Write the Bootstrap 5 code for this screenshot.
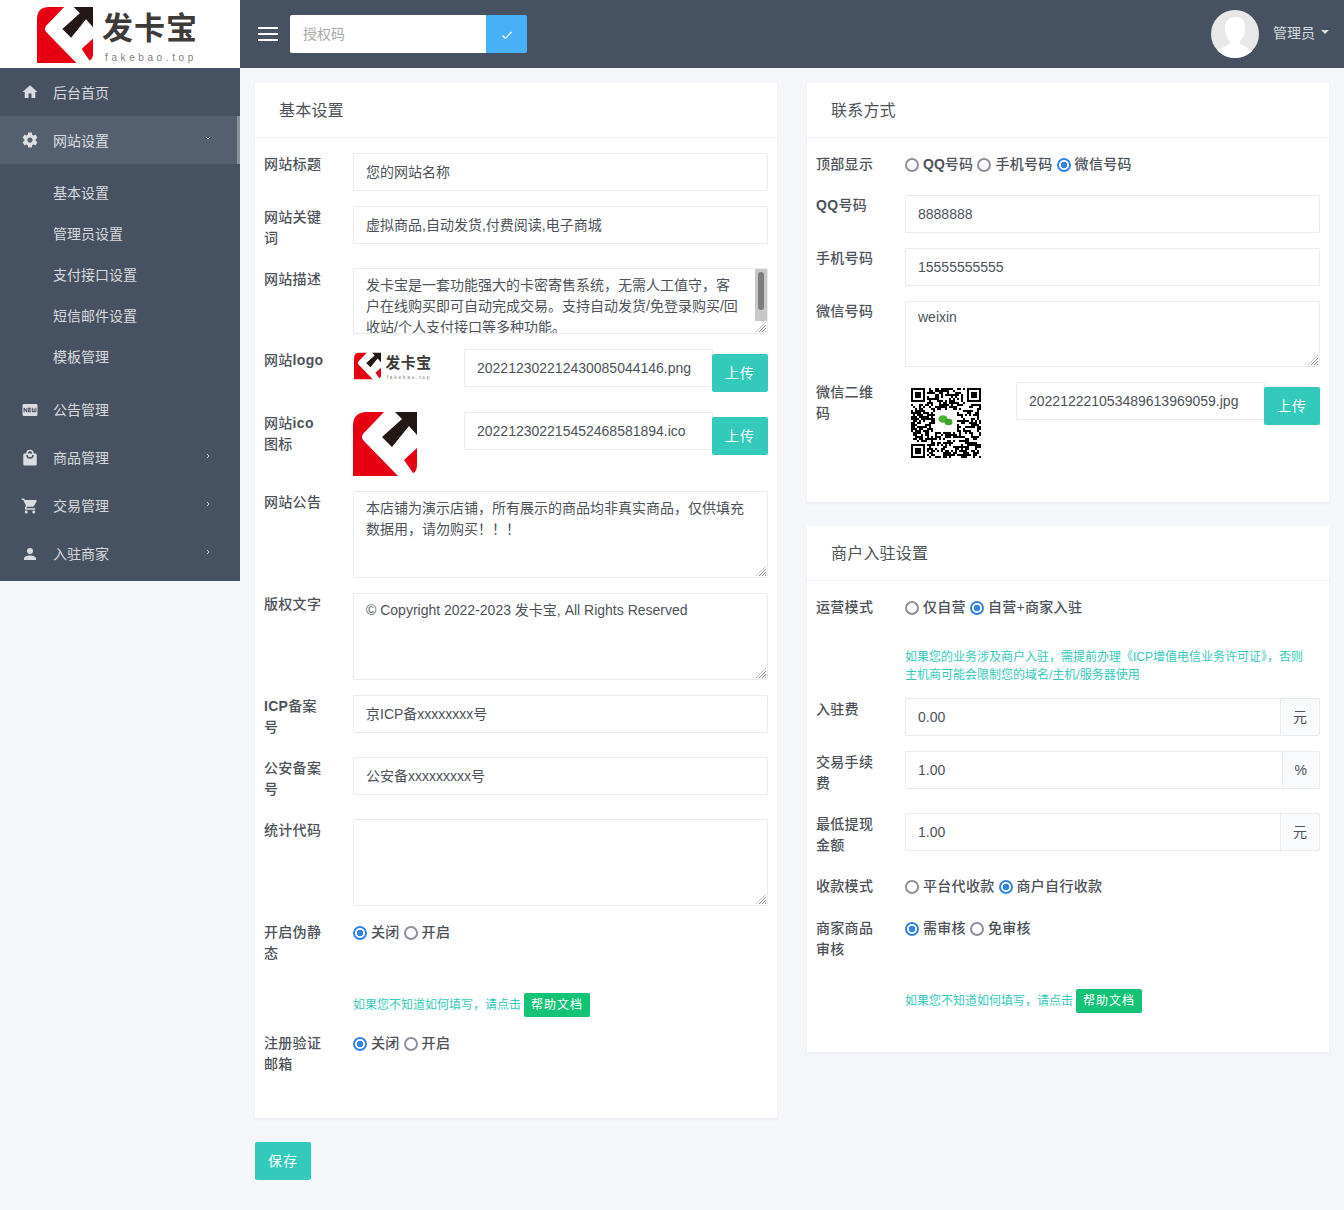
<!DOCTYPE html>
<html lang="zh-CN">
<head>
  <meta charset="UTF-8">
  <meta name="viewport" content="width=device-width, initial-scale=1">
  <title>网站设置</title>

  <link href="https://cdn.jsdelivr.net/npm/bootstrap@5.3.0/dist/css/bootstrap.min.css" rel="stylesheet">

  <style>
    body { background: #f5f6fa; color: #4d5259; font-family: "Liberation Sans", "Noto Sans CJK SC", sans-serif; font-size: 14px; line-height: 21px; }

    /* top bar */
    .top-bar { height: 68px; background: #465161; }
    .brand-box { width: 240px; height: 68px; background: #fff; padding: 2px 0 0 37px; }
    .brand-box svg { display: block; }
    .burger { width: 20px; margin: 0 12px 0 18px; }
    .burger span { display: block; height: 2px; background: #fff; margin: 4px 0; }
    .auth-box { width: 237px; }
    .auth-box .form-control { height: 38px; border: 0; padding-left: 13px; }
    .auth-box .btn { width: 41px; height: 38px; padding: 0; background: #48b0f7; border: 0; border-radius: 0 2px 2px 0; }
    .avatar-pic { width: 48px; height: 48px; display: block; }
    .admin-link { color: rgba(255,255,255,.8); margin: 0 15px 2px 14px; text-decoration: none; }
    .admin-link:hover { color: #fff; }
    .admin-link::after { margin-left: 6px; }

    /* side menu */
    .side-menu { width: 240px; height: 513px; background: #465161; flex-shrink: 0; }
    .side-link { position: relative; height: 48px; padding: 0 0 0 21px; color: rgba(255,255,255,.8); display: flex; align-items: center; }
    .side-link:hover { color: #fff; }
    .side-link svg.ico { width: 18px; height: 18px; margin-right: 14px; fill: currentColor; flex-shrink: 0; }
    .side-link .arrow { position: absolute; left: 205px; top: 19px; width: 6px; height: 6px; fill: none; stroke: rgba(255,255,255,.75); stroke-width: 1; }
    .side-link.low-text { padding-top: 2px; }
    .side-link.low-text svg.ico { margin-top: -2px; }
    .side-link.is-open { background: #545f6f; box-shadow: inset -3px 0 0 #8a929c; }
    .side-sub { padding: 9px 0 8px; }
    .side-sub a { display: block; height: 41px; line-height: 41px; padding-left: 53px; color: rgba(255,255,255,.8); text-decoration: none; }

    /* panels */
    .main-area { padding: 15px 15px 30px; }
    .main-row { --bs-gutter-x: 30px; --bs-gutter-y: 0; }
    .panel-box { border: 0; border-radius: 0; box-shadow: 0 2px 3px rgba(0,0,0,.035); margin-bottom: 24px; }
    .panel-box .card-header { height: 55px; padding: 17px 24px 0 24px; background: #fff; border-bottom: 1px solid #f1f2f3; border-radius: 0; font-size: 16px; letter-spacing: .2px; color: #4d5259; }
    .panel-box .card-body { padding: 15px 9px 24px; }
    .field-line { display: flex; margin-bottom: 15px; }
    .field-name { width: 62px; margin: 1px 27px 4px 0; flex-shrink: 0; font-weight: 500; letter-spacing: .3px; color: #4d5259; }
    .field-name.flush { margin: 0 27px 5px 0; }
    .field-val { flex: 1; min-width: 0; }

    .form-control { height: 38px; padding: 6px 12px; font-size: 14px; line-height: 21px; color: #4d5259; border: 1px solid #ebebeb; border-radius: 2px; }
    .form-control::placeholder { color: #aaa; }
    .form-control.cjk-val { padding: 5px 12px 7px; }
    textarea.form-control { display: block; resize: none; }
    .tall-87 { height: 87px; }
    .tall-66 { height: 66px; }
    .latin-area { padding-top: 5px !important; }

    /* textarea resize grip and scrollbar, both lie over the field */
    .area-wrap { position: relative; }
    .area-wrap::after { content: ""; position: absolute; right: 2px; bottom: 2px; width: 10px; height: 10px; pointer-events: none;
      background: repeating-linear-gradient(135deg, #8a8a8a 0 1px, #fff 1px 2.2px); clip-path: polygon(100% 0, 100% 100%, 0 100%); }
    .desc-area { padding-right: 27px; overflow: hidden; }
    .fake-scroll { position: absolute; right: 1px; top: 1px; width: 12px; height: 52px; background: #c8c8c8; }
    .fake-scroll i { display: block; width: 6px; height: 38px; margin: 3px 3px 0; background: #7d7d7d; border-radius: 3px; }

    .input-group-text { padding: 6px 12px; font-size: 14px; color: #4d5259; background: #f9fafb; border: 1px solid #ebebeb; border-radius: 0 2px 2px 0; }

    .btn-teal { background: #33cabb; border: 0; color: #fff; border-radius: 2px; height: 38px; width: 56px; padding: 0; font-size: 14px; letter-spacing: 1px; }
    .btn-teal:hover { background: #2bb5a7; color: #fff; }
    .pic-slot { width: 111px; min-height: 48px; flex-shrink: 0; }
    .logo-mini { display: block; margin: 1px 0 0 1px; }
    .upload-input { width: 249px; flex-shrink: 0; }
    .upload-btn { margin: 5px 0 0 -1px; flex-shrink: 0; position: relative; }

    .pick-row { display: flex; align-items: center; height: 23px; margin-bottom: 4px; font-weight: 500; letter-spacing: .3px; color: #4d5259; }
    .pick-row b { font-weight: 700; letter-spacing: 0; }
    .pick-row label { margin: 0 4px; }
    .pick-row .form-check-input { width: 14px; height: 14px; margin: 0; flex-shrink: 0; background-image: none; background-color: #fff; border: 2px solid #8f8f9d; box-shadow: none; }
    .pick-row .form-check-input:checked { border-color: #3584e4; background-color: #fff; background-image: radial-gradient(circle, #3584e4 3px, transparent 3.6px); }

    .tip-line { font-size: 12px; line-height: 18px; color: #33cabb; }
    .help-tip { margin: 25px 8px 14px 89px; }
    .help-row { display: flex; align-items: center; height: 24px; margin: 25px 0 15px 89px; }
    .help-btn { height: 24px; width: 66px; margin-left: 3px; padding: 0; font-size: 12px; letter-spacing: 1px; line-height: 24px; color: #fff; background: #15c377; border: 0; border-radius: 2px; }
    .help-btn:hover { background: #12ad69; color: #fff; }
  </style>
</head>
<body>

  <!-- logo mark, used in the header and in the form -->
  <svg width="0" height="0" class="position-absolute">
    <symbol id="markIcon" viewBox="0 0 64 64">
      <path fill="#e60012" d="M14 0H31L10 22Q8 25 10 28L45 64H0V14Q0 0 14 0Z"/>
      <path fill="#e60012" d="M51 48 64 36V54Q64 57 62 60L60 61Z"/>
      <path fill="#231815" d="M42 0H64V23L56 14 39 35 29 25 49 7Z"/>
    </symbol>
  </svg>

  <!-- Top bar -->
  <header class="top-bar d-flex align-items-center">
    <div class="brand-box">
      <svg width="170" height="66" viewBox="0 -5 170 66">
        <use href="#markIcon" width="56" height="56"/>
        <text x="65" y="32" font-family="'Noto Sans CJK SC', sans-serif" font-size="31" font-weight="700" letter-spacing="1" fill="#3e3a39">发卡宝</text>
        <text x="68" y="54" font-family="'Liberation Sans', sans-serif" font-size="10" letter-spacing="3.6" fill="#808080">fakebao.top</text>
      </svg>
    </div>
    <div class="burger"><span></span><span></span><span></span></div>
    <div class="input-group auth-box">
      <input class="form-control" type="text" placeholder="授权码">
      <button class="btn" type="button" aria-label="确定">
        <svg width="12" height="12" viewBox="0 0 12 12" fill="none" stroke="#fff" stroke-width="1.2"><path d="M1.5 6.5 4.5 9.3 10.5 3"/></svg>
      </button>
    </div>
    <div class="ms-auto d-flex align-items-center">
      <svg class="avatar-pic" viewBox="0 0 48 48">
        <circle cx="24" cy="24" r="24" fill="#e8e8e8"/>
        <path fill="#fff" d="M14 18C14 10 19 7 25 7 31 7 35 11 34 19 34 25 32 28 29 31V34C33 36 38 38 41 41 37 45 31 48 24 48 17 48 11 45 7 41 10 38 15 36 19 34V31C16 28 14 24 14 18Z"/>
      </svg>
      <a class="dropdown-toggle admin-link" href="#">管理员</a>
    </div>
  </header>

  <div class="d-flex align-items-start">

    <!-- Side menu -->
    <aside class="side-menu">
      <nav class="nav flex-column">
        <a class="nav-link side-link low-text" href="#">
          <svg class="ico" viewBox="0 0 24 24"><path d="M10 20v-6h4v6h5v-8h3L12 3 2 12h3v8z"/></svg>后台首页
        </a>
        <a class="nav-link side-link low-text is-open" href="#">
          <svg class="ico" viewBox="0 0 24 24"><path d="M19.43 12.98c.04-.32.07-.64.07-.98s-.03-.66-.07-.98l2.11-1.65c.19-.15.24-.42.12-.64l-2-3.46c-.12-.22-.39-.3-.61-.22l-2.49 1c-.52-.4-1.08-.73-1.69-.98l-.38-2.65C14.46 2.18 14.25 2 14 2h-4c-.25 0-.46.18-.49.42l-.38 2.65c-.61.25-1.17.59-1.69.98l-2.49-1c-.23-.09-.49 0-.61.22l-2 3.46c-.13.22-.07.49.12.64l2.11 1.65c-.04.32-.07.65-.07.98s.03.66.07.98l-2.11 1.65c-.19.15-.24.42-.12.64l2 3.46c.12.22.39.3.61.22l2.49-1c.52.4 1.08.73 1.69.98l.38 2.65c.03.24.24.42.49.42h4c.25 0 .46-.18.49-.42l.38-2.65c.61-.25 1.17-.59 1.69-.98l2.49 1c.23.09.49 0 .61-.22l2-3.46c.12-.22.07-.49-.12-.64l-2.11-1.65zM12 15.5c-1.93 0-3.5-1.57-3.5-3.5s1.57-3.5 3.5-3.5 3.5 1.57 3.5 3.5-1.57 3.5-3.5 3.5z"/></svg>网站设置
          <svg class="arrow" viewBox="0 0 6 6"><path d="M1 2 3 4 5 2"/></svg>
        </a>
        <div class="side-sub">
          <a href="#">基本设置</a>
          <a href="#">管理员设置</a>
          <a href="#">支付接口设置</a>
          <a href="#">短信邮件设置</a>
          <a href="#">模板管理</a>
        </div>
        <a class="nav-link side-link" href="#">
          <svg class="ico" viewBox="0 0 24 24"><path d="M20 4H4c-1.11 0-1.99.89-1.99 2L2 18c0 1.11.89 2 2 2h16c1.11 0 2-.89 2-2V6c0-1.11-.89-2-2-2zM8.5 15H7.3l-2.55-3.5V15H3.5V9h1.25l2.5 3.5V9H8.5v6zm5-4.74H11v1.12h2.5v1.26H11v1.11h2.5V15h-4V9h4v1.26zm7 3.74c0 .55-.45 1-1 1h-4c-.55 0-1-.45-1-1V9h1.25v4.51h1.13V9.99h1.25v3.51h1.12V9h1.25v5z"/></svg>公告管理
        </a>
        <a class="nav-link side-link" href="#">
          <svg class="ico" viewBox="0 0 24 24"><path d="M12 13A5 5 0 0 1 7 8H9A3 3 0 0 0 12 11A3 3 0 0 0 15 8H17A5 5 0 0 1 12 13M12 3A3 3 0 0 1 15 6H9A3 3 0 0 1 12 3M19 6H17A5 5 0 0 0 12 1A5 5 0 0 0 7 6H5C3.89 6 3 6.89 3 8V20A2 2 0 0 0 5 22H19A2 2 0 0 0 21 20V8C21 6.89 20.1 6 19 6Z"/></svg>商品管理
          <svg class="arrow" viewBox="0 0 6 6"><path d="M2 1 4 3 2 5"/></svg>
        </a>
        <a class="nav-link side-link" href="#">
          <svg class="ico" viewBox="0 0 24 24"><path d="M17,18C15.89,18 15,18.89 15,20A2,2 0 0,0 17,22A2,2 0 0,0 19,20C19,18.89 18.1,18 17,18M1,2V4H3L6.6,11.59L5.24,14.04C5.09,14.32 5,14.65 5,15A2,2 0 0,0 7,17H19V15H7.42A0.25,0.25 0 0,1 7.17,14.75C7.17,14.7 7.18,14.66 7.2,14.63L8.1,13H15.55C16.3,13 16.96,12.58 17.3,11.97L20.88,5.5C20.95,5.34 21,5.17 21,5A1,1 0 0,0 20,4H5.21L4.27,2M7,18C5.89,18 5,18.89 5,20A2,2 0 0,0 7,22A2,2 0 0,0 9,20C9,18.89 8.1,18 7,18Z"/></svg>交易管理
          <svg class="arrow" viewBox="0 0 6 6"><path d="M2 1 4 3 2 5"/></svg>
        </a>
        <a class="nav-link side-link" href="#">
          <svg class="ico" viewBox="0 0 24 24"><path d="M12,4A4,4 0 0,1 16,8A4,4 0 0,1 12,12A4,4 0 0,1 8,8A4,4 0 0,1 12,4M12,14C16.42,14 20,15.79 20,18V20H4V18C4,15.79 7.58,14 12,14Z"/></svg>入驻商家
          <svg class="arrow" viewBox="0 0 6 6"><path d="M2 1 4 3 2 5"/></svg>
        </a>
      </nav>
    </aside>

    <!-- Main -->
    <main class="main-area flex-grow-1">
      <div class="row main-row">

        <div class="col-6">
          <div class="card panel-box">
            <div class="card-header">基本设置</div>
            <div class="card-body">
              <div class="field-line">
                <label class="field-name">网站标题</label>
                <div class="field-val"><input class="form-control cjk-val" type="text" value="您的网站名称"></div>
              </div>
              <div class="field-line">
                <label class="field-name">网站关键词</label>
                <div class="field-val"><input class="form-control cjk-val" type="text" value="虚拟商品,自动发货,付费阅读,电子商城"></div>
              </div>
              <div class="field-line">
                <label class="field-name">网站描述</label>
                <div class="field-val area-wrap">
                  <textarea class="form-control tall-66 desc-area">发卡宝是一套功能强大的卡密寄售系统&#xFF0C;无需人工值守&#xFF0C;客户在线购买即可自动完成交易。支持自动发货/免登录购买/回收站/个人支付接口等多种功能。</textarea>
                  <div class="fake-scroll"><i></i></div>
                </div>
              </div>
              <div class="field-line">
                <label class="field-name">网站<b>logo</b></label>
                <div class="field-val d-flex">
                  <div class="pic-slot">
                    <svg class="logo-mini" width="82" height="32" viewBox="0 -5 170 66">
                      <use href="#markIcon" width="56" height="56"/>
                      <text x="65" y="32" font-family="'Noto Sans CJK SC', sans-serif" font-size="31" font-weight="700" letter-spacing="1" fill="#3e3a39">发卡宝</text>
                      <text x="68" y="54" font-family="'Liberation Sans', sans-serif" font-size="10" letter-spacing="3.6" fill="#808080">fakebao.top</text>
                    </svg>
                  </div>
                  <input class="form-control upload-input" type="text" value="202212302212430085044146.png">
                  <button class="btn btn-teal upload-btn" type="button">上传</button>
                </div>
              </div>
              <div class="field-line">
                <label class="field-name">网站<b>ico</b>图标</label>
                <div class="field-val d-flex">
                  <div class="pic-slot"><svg class="d-block" width="64" height="64"><use href="#markIcon"/></svg></div>
                  <input class="form-control upload-input" type="text" value="202212302215452468581894.ico">
                  <button class="btn btn-teal upload-btn align-self-start" type="button">上传</button>
                </div>
              </div>
              <div class="field-line">
                <label class="field-name">网站公告</label>
                <div class="field-val area-wrap"><textarea class="form-control tall-87">本店铺为演示店铺&#xFF0C;所有展示的商品均非真实商品&#xFF0C;仅供填充数据用&#xFF0C;请勿购买&#xFF01;&#xFF01;&#xFF01;</textarea></div>
              </div>
              <div class="field-line">
                <label class="field-name">版权文字</label>
                <div class="field-val area-wrap"><textarea class="form-control tall-87">© Copyright 2022-2023 发卡宝, All Rights Reserved</textarea></div>
              </div>
              <div class="field-line">
                <label class="field-name"><b>ICP</b>备案<br>号</label>
                <div class="field-val"><input class="form-control cjk-val" type="text" value="京ICP备xxxxxxxx号"></div>
              </div>
              <div class="field-line">
                <label class="field-name">公安备案号</label>
                <div class="field-val"><input class="form-control cjk-val" type="text" value="公安备xxxxxxxxx号"></div>
              </div>
              <div class="field-line">
                <label class="field-name">统计代码</label>
                <div class="field-val area-wrap"><textarea class="form-control tall-87"></textarea></div>
              </div>
              <div class="field-line mb-0">
                <label class="field-name">开启伪静态</label>
                <div class="field-val pick-row">
                  <input class="form-check-input" type="radio" name="rewrite" checked><label>关闭</label>
                  <input class="form-check-input" type="radio" name="rewrite"><label>开启</label>
                </div>
              </div>
              <div class="help-row">
                <span class="tip-line">如果您不知道如何填写&#xFF0C;请点击</span>
                <a class="btn help-btn" href="#">帮助文档</a>
              </div>
              <div class="field-line">
                <label class="field-name">注册验证邮箱</label>
                <div class="field-val pick-row">
                  <input class="form-check-input" type="radio" name="mailcheck" checked><label>关闭</label>
                  <input class="form-check-input" type="radio" name="mailcheck"><label>开启</label>
                </div>
              </div>
            </div>
          </div>
          <button class="btn btn-teal" type="button">保存</button>
        </div>

        <div class="col-6">
          <div class="card panel-box">
            <div class="card-header">联系方式</div>
            <div class="card-body">
              <div class="field-line">
                <label class="field-name">顶部显示</label>
                <div class="field-val pick-row">
                  <input class="form-check-input" type="radio" name="topshow"><label><b>QQ</b>号码</label>
                  <input class="form-check-input" type="radio" name="topshow"><label>手机号码</label>
                  <input class="form-check-input" type="radio" name="topshow" checked><label>微信号码</label>
                </div>
              </div>
              <div class="field-line">
                <label class="field-name flush"><b>QQ</b>号码</label>
                <div class="field-val"><input class="form-control" type="text" value="8888888"></div>
              </div>
              <div class="field-line">
                <label class="field-name flush">手机号码</label>
                <div class="field-val"><input class="form-control" type="text" value="15555555555"></div>
              </div>
              <div class="field-line">
                <label class="field-name flush">微信号码</label>
                <div class="field-val area-wrap"><textarea class="form-control tall-66 latin-area">weixin</textarea></div>
              </div>
              <div class="field-line">
                <label class="field-name flush">微信二维码</label>
                <div class="field-val d-flex">
                  <div class="pic-slot"><svg id="qrPic" class="d-block" width="81" height="81" viewBox="0 0 81 81"></svg></div>
                  <input class="form-control upload-input" type="text" value="202212221053489613969059.jpg">
                  <button class="btn btn-teal upload-btn align-self-start" type="button">上传</button>
                </div>
              </div>
            </div>
          </div>

          <div class="card panel-box">
            <div class="card-header">商户入驻设置</div>
            <div class="card-body">
              <div class="field-line mb-0">
                <label class="field-name mb-0">运营模式</label>
                <div class="field-val pick-row">
                  <input class="form-check-input" type="radio" name="runmode"><label>仅自营</label>
                  <input class="form-check-input" type="radio" name="runmode" checked><label>自营+商家入驻</label>
                </div>
              </div>
              <div class="tip-line help-tip">如果您的业务涉及商户入驻&#xFF0C;需提前办理《ICP增值电信业务许可证》&#xFF0C;否则主机商可能会限制您的域名/主机/服务器使用</div>
              <div class="field-line">
                <label class="field-name">入驻费</label>
                <div class="field-val input-group align-self-start">
                  <input class="form-control" type="text" value="0.00"><span class="input-group-text">元</span>
                </div>
              </div>
              <div class="field-line">
                <label class="field-name">交易手续费</label>
                <div class="field-val input-group align-self-start">
                  <input class="form-control" type="text" value="1.00"><span class="input-group-text">%</span>
                </div>
              </div>
              <div class="field-line">
                <label class="field-name">最低提现金额</label>
                <div class="field-val input-group align-self-start">
                  <input class="form-control" type="text" value="1.00"><span class="input-group-text">元</span>
                </div>
              </div>
              <div class="field-line">
                <label class="field-name">收款模式</label>
                <div class="field-val pick-row">
                  <input class="form-check-input" type="radio" name="paymode"><label>平台代收款</label>
                  <input class="form-check-input" type="radio" name="paymode" checked><label>商户自行收款</label>
                </div>
              </div>
              <div class="field-line mb-0">
                <label class="field-name">商家商品审核</label>
                <div class="field-val pick-row">
                  <input class="form-check-input" type="radio" name="audit" checked><label>需审核</label>
                  <input class="form-check-input" type="radio" name="audit"><label>免审核</label>
                </div>
              </div>
              <div class="help-row">
                <span class="tip-line">如果您不知道如何填写&#xFF0C;请点击</span>
                <a class="btn help-btn" href="#">帮助文档</a>
              </div>
            </div>
          </div>
        </div>

      </div>
    </main>
  </div>

  <script src="https://cdn.jsdelivr.net/npm/bootstrap@5.3.0/dist/js/bootstrap.bundle.min.js"></script>

  <script>
    // Fake QR code: finder squares plus seeded noise, 2px per module
    function drawQr() {
      const size = 35, cell = 2, off = 6;
      let seed = 7, d = "";
      const rnd = () => (seed = (seed * 16807) % 2147483647) / 2147483647;
      const finder = (x, y) => x >= 0 && x < 7 && y >= 0 && y < 7 && (x === 0 || x === 6 || y === 0 || y === 6 || (x > 1 && x < 5 && y > 1 && y < 5));
      for (let y = 0; y < size; y++) {
        for (let x = 0; x < size; x++) {
          const inA = x < 8 && y < 8, inB = x >= size - 8 && y < 8, inC = x < 8 && y >= size - 8;
          let on;
          if (inA) on = finder(x, y);
          else if (inB) on = finder(x - (size - 7), y);
          else if (inC) on = finder(x, y - (size - 7));
          else on = rnd() > 0.5;
          if (on) d += `M${off + x * cell} ${off + y * cell}h${cell}v${cell}h-${cell}z`;
        }
      }
      document.getElementById("qrPic").innerHTML =
        `<path d="${d}" fill="#000"/>` +
        `<rect x="30" y="28" width="22" height="22" fill="#fff"/>` +
        `<ellipse cx="38" cy="37" rx="4.5" ry="3.8" fill="#4cb034"/>` +
        `<ellipse cx="43.5" cy="40" rx="4" ry="3.3" fill="#3da12b"/>`;
    }
    document.addEventListener("DOMContentLoaded", drawQr);
  </script>
</body>
</html>
